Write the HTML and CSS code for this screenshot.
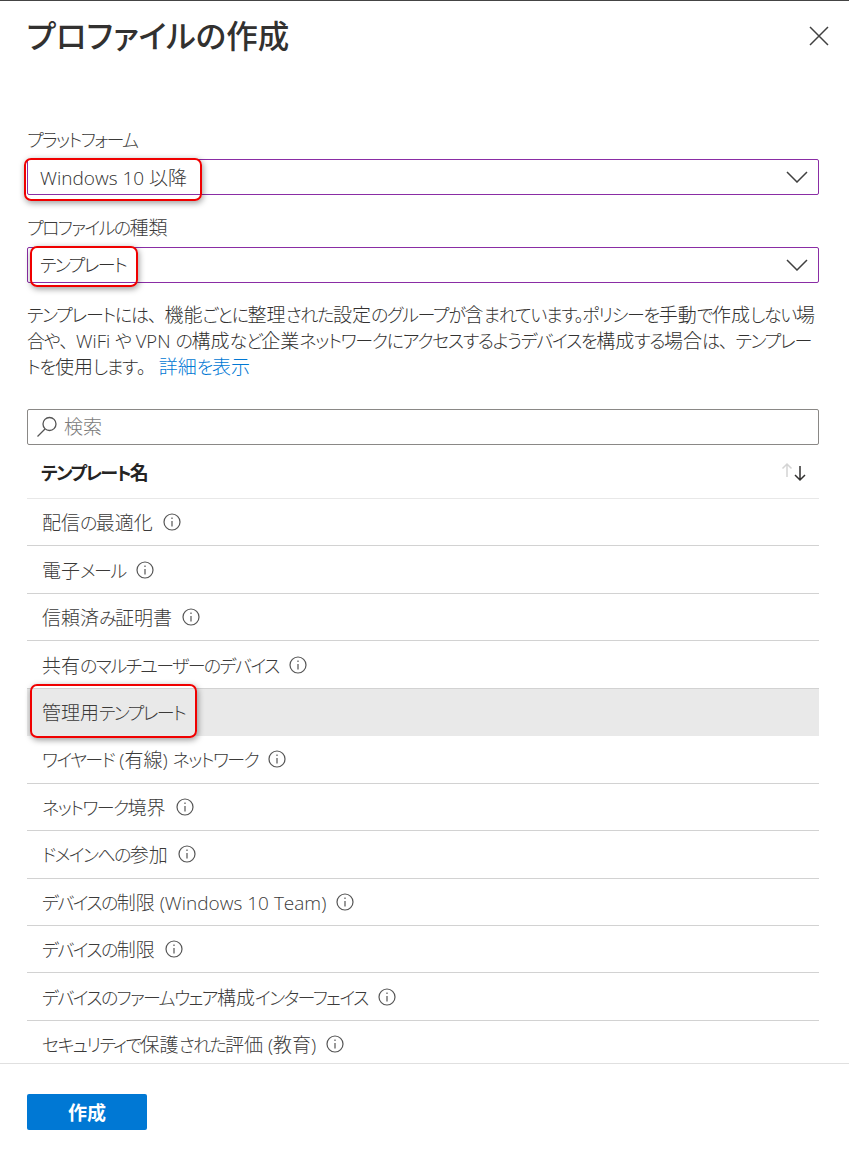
FILE: index.html
```html
<!DOCTYPE html>
<html lang="ja">
<head>
    <meta charset="UTF-8">
    <title>プロファイルの作成</title>
    <link rel="stylesheet" href="styles.css">
</head>
<body>
    <div class="panel">
        <div class="header">
            <h1>プロファイルの作成</h1>
            <svg class="close" width="20" height="20" viewBox="0 0 20 20"><path d="M1 1L19 19M19 1L1 19"/></svg>
        </div>

        <div class="content">
            <label class="field-label"><span class="kana">プラットフォーム</span></label>
            <div class="select">
                <span>Windows 10 以降</span>
                <svg class="chevron" width="22" height="12" viewBox="0 0 22 12"><path d="M1 1L11 11L21 1"/></svg>
                <div class="callout callout-platform"></div>
            </div>

            <label class="field-label field-label-second"><span class="kana">プロファイルの</span>種類</label>
            <div class="select">
                <span class="kana">テンプレート</span>
                <svg class="chevron" width="22" height="12" viewBox="0 0 22 12"><path d="M1 1L11 11L21 1"/></svg>
                <div class="callout callout-type"></div>
            </div>

            <p class="description"><span class="kana">テンプレートには<span class="punct">、</span></span>機能<span class="kana">ごとに</span>整理<span class="kana">された</span>設定<span class="kana">のグループが</span>含<span class="kana">まれています。ポリシーを</span>手動<span class="kana">で</span>作成<span class="kana">しない</span>場<span class="kana">合や<span class="punct">、</span></span><span class="latin">WiFi</span> <span class="kana">や</span> <span class="latin">VPN</span> <span class="kana">の</span>構成<span class="kana">など</span>企業<span class="kana">ネットワークにアクセスするようデバイスを</span>構成<span class="kana">する</span>場合<span class="kana">は<span class="punct">、</span>テンプレートを</span>使用<span class="kana">します<span class="punct">。</span></span> <a href="#">詳細<span class="kana">を</span>表示</a></p>

            <div class="search">
                <svg class="search-icon" width="22" height="22" viewBox="0 0 22 22"><circle cx="13.5" cy="8" r="6.5"/><path d="M9 13L1.5 20.5"/></svg>
                <span class="search-text">検索</span>
            </div>

            <div class="table-head">
                <span><span class="kana">テンプレート</span>名</span>
                <svg class="sort" width="26" height="20" viewBox="0 0 26 20">
                    <path class="sort-up" d="M6 15V2M1.5 6.5L6 2L10.500 6.500"/>
                    <path class="sort-down" d="M19 4V18M14 13L19 18L24 13"/>
                </svg>
            </div>

            <div class="row"><span>配信<span class="kana">の</span>最適化</span><svg class="info" viewBox="0 0 18 18"><circle cx="9" cy="9" r="8"/><path d="M9 8V13.500M9 4.500V6"/></svg></div>
            <div class="row"><span>電子<span class="kana">メール</span></span><svg class="info" viewBox="0 0 18 18"><circle cx="9" cy="9" r="8"/><path d="M9 8V13.500M9 4.500V6"/></svg></div>
            <div class="row"><span>信頼済<span class="kana">み</span>証明書</span><svg class="info" viewBox="0 0 18 18"><circle cx="9" cy="9" r="8"/><path d="M9 8V13.500M9 4.500V6"/></svg></div>
            <div class="row"><span>共有<span class="kana">のマルチユーザーのデバイス</span></span><svg class="info" viewBox="0 0 18 18"><circle cx="9" cy="9" r="8"/><path d="M9 8V13.500M9 4.500V6"/></svg></div>
            <div class="row row-selected"><span>管理用<span class="kana">テンプレート</span></span><div class="callout callout-row"></div></div>
            <div class="row"><span><span class="kana">ワイヤード</span> (有線) <span class="kana">ネットワーク</span></span><svg class="info" viewBox="0 0 18 18"><circle cx="9" cy="9" r="8"/><path d="M9 8V13.500M9 4.500V6"/></svg></div>
            <div class="row"><span><span class="kana">ネットワーク</span>境界</span><svg class="info" viewBox="0 0 18 18"><circle cx="9" cy="9" r="8"/><path d="M9 8V13.500M9 4.500V6"/></svg></div>
            <div class="row"><span><span class="kana">ドメインへの</span>参加</span><svg class="info" viewBox="0 0 18 18"><circle cx="9" cy="9" r="8"/><path d="M9 8V13.500M9 4.500V6"/></svg></div>
            <div class="row"><span><span class="kana">デバイスの</span>制限 (Windows 10 Team)</span><svg class="info" viewBox="0 0 18 18"><circle cx="9" cy="9" r="8"/><path d="M9 8V13.500M9 4.500V6"/></svg></div>
            <div class="row"><span><span class="kana">デバイスの</span>制限</span><svg class="info" viewBox="0 0 18 18"><circle cx="9" cy="9" r="8"/><path d="M9 8V13.500M9 4.500V6"/></svg></div>
            <div class="row"><span><span class="kana">デバイスのファームウェア</span>構成<span class="kana">インターフェイス</span></span><svg class="info" viewBox="0 0 18 18"><circle cx="9" cy="9" r="8"/><path d="M9 8V13.500M9 4.500V6"/></svg></div>
            <div class="row"><span><span class="kana">セキュリティで</span>保護<span class="kana">された</span>評価 (教育)</span><svg class="info" viewBox="0 0 18 18"><circle cx="9" cy="9" r="8"/><path d="M9 8V13.500M9 4.500V6"/></svg></div>
        </div>

        <div class="footer">
            <button class="btn-primary">作成</button>
        </div>
    </div>
</body>
</html>
```

FILE: styles.css
```css
body {
    font-family: "Open Sans", "Noto Sans CJK JP", sans-serif;
    font-feature-settings: "palt";
    margin: 0;
    background: #ffffff;
    color: #323130;
    font-size: 19px;
}

.panel {
    display: flex;
    flex-direction: column;
    height: 1170px;
    overflow: hidden;
    border-top: 1px solid #444444;
    box-sizing: border-box;
}

.header {
    display: flex;
    justify-content: space-between;
    align-items: center;
    height: 69px;
    padding: 0 20px 0 27px;
    flex-shrink: 0;
}

.header h1 {
    margin: 0;
    font-size: 31.5px;
    font-weight: 500;
    line-height: 70px;
    color: #323130;
}

.close path,
.chevron path {
    fill: none;
    stroke: #404040;
    stroke-width: 1.5;
}

.content {
    flex: 1;
    min-height: 0;
    overflow: hidden;
    padding: 0 30px 0 27px;
}

/* kana runs are squeezed, they are much narrower than kanji in the original UI font */
.kana {
    font-size: 18px;
    letter-spacing: -1.6px;
    line-height: 1;
}

.latin {
    font-size: 18.5px;
    line-height: 1;
}

.field-label {
    display: block;
    line-height: 24px;
    margin-top: 58px;
    margin-bottom: 7px;
    color: #3b3a39;
    font-weight: 300;
}

.field-label-second {
    margin-top: 21px;
    margin-bottom: 7px;
}

.select {
    position: relative;
    display: flex;
    justify-content: space-between;
    align-items: center;
    height: 36px;
    box-sizing: border-box;
    border: 1px solid #8a2da5;
    border-radius: 2px;
    padding: 0 10px 0 12px;
    font-weight: 300;
}

.chevron {
    display: block;
}

.callout {
    position: absolute;
    box-sizing: border-box;
    border: 2px solid #f00000;
    border-radius: 7px;
    box-shadow: 1px 2px 6px rgba(0,0,0,0.4);
    pointer-events: none;
}

.callout-platform {
    left: -4px;
    top: -2px;
    width: 178px;
    height: 43px;
}

.callout-type {
    left: 2px;
    top: -2px;
    width: 108px;
    height: 41px;
}

.callout-row {
    left: 3px;
    top: -5px;
    width: 167px;
    height: 54px;
}

.description {
    margin: 19px 0 0;
    line-height: 26px;
    font-weight: 300;
    color: #323130;
}

.description .kana {
    letter-spacing: -1.3px;
}

/* full width punctuation, not trimmed by palt */
.punct {
    font-feature-settings: normal;
}

.description a {
    color: #0078d4;
    text-decoration: none;
}

.search {
    display: flex;
    align-items: center;
    gap: 6px;
    height: 36px;
    box-sizing: border-box;
    border: 1px solid #8a8886;
    border-radius: 2px;
    padding: 0 8px;
    margin-top: 29px;
    color: #7a7a7a;
    font-weight: 300;
}

.search-text {
    margin-bottom: 3px;
}

.search-icon circle,
.search-icon path {
    fill: none;
    stroke: #555555;
    stroke-width: 1.3;
}

.table-head {
    display: flex;
    justify-content: space-between;
    align-items: center;
    height: 54px;
    box-sizing: border-box;
    border-bottom: 1px solid #e8e8e8;
    padding: 0 12px 0 14px;
    font-weight: 600;
    color: #252423;
}

.sort path {
    fill: none;
    stroke-width: 1.5;
}

.sort-up {
    stroke: #d4d4d4;
}

.sort-down {
    stroke: #323130;
}

.row {
    position: relative;
    display: flex;
    align-items: center;
    gap: 10px;
    height: 47.45px;
    box-sizing: border-box;
    border-bottom: 1px solid #d2d2d2;
    padding: 0 15px;
    font-weight: 300;
    color: #3b3a39;
}

.row-selected {
    background: #e9e9e9;
    border-bottom-color: #e9e9e9;
}

.info {
    width: 18px;
    height: 18px;
    flex-shrink: 0;
}

.info circle,
.info path {
    fill: none;
    stroke: #555555;
    stroke-width: 1.2;
}

.footer {
    flex-shrink: 0;
    height: 107px;
    box-sizing: border-box;
    border-top: 1px solid #e0e0e0;
    background: #ffffff;
    padding: 30px 27px 0;
}

.btn-primary {
    display: block;
    width: 120px;
    height: 36px;
    background: #0078d4;
    color: #ffffff;
    border: none;
    border-radius: 2px;
    font-family: inherit;
    font-size: 19px;
    font-weight: 700;
    padding: 0;
}
```
